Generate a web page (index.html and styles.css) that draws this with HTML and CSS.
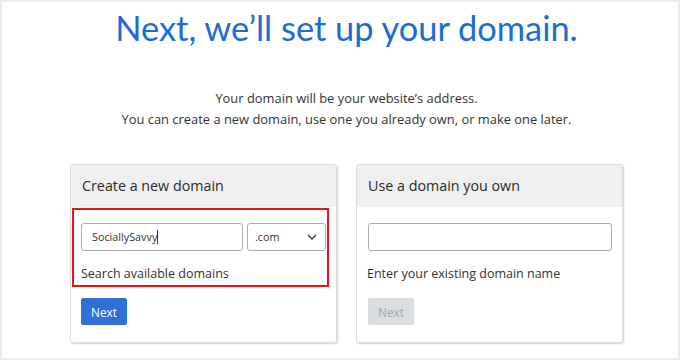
FILE: index.html
```html
<!DOCTYPE html>
<html>
<head>
<meta charset="utf-8">
<link rel="stylesheet" href="styles.css">
</head>
<body>
<div class="page">
  <h1 class="title">Next, we’ll set up your domain.</h1>
  <p class="intro">Your domain will be your website’s address.<br>You can create a new domain, use one you already own, or make one later.</p>
  <div class="cards">
    <section class="card">
      <header class="card-head">Create a new domain</header>
      <div class="card-body">
        <div class="highlight"></div>
        <div class="row">
          <div class="field field-name">SociallySavvy<span class="caret"></span></div>
          <div class="field field-tld">.com
            <svg class="chev" width="10" height="6" viewBox="0 0 10 6"><path d="M1 1 L5 5 L9 1" fill="none" stroke="#333" stroke-width="1.3"/></svg>
          </div>
        </div>
        <p class="hint">Search available domains</p>
        <button class="btn">Next</button>
      </div>
    </section>
    <section class="card">
      <header class="card-head">Use a domain you own</header>
      <div class="card-body">
        <div class="row">
          <div class="field field-full"></div>
        </div>
        <p class="hint">Enter your existing domain name</p>
        <button class="btn btn-disabled">Next</button>
      </div>
    </section>
  </div>
</div>
</body>
</html>
```
FILE: styles.css
```css
html, body {
  margin: 0;
  padding: 0;
  background: #fff;
}
.page {
  width: 680px;
  height: 360px;
  box-sizing: border-box;
  border: 2px solid #ececec;
  padding-left: 68px;
  overflow: hidden;
}
.title {
  margin: 0;
  width: 553px;
  text-align: center;
  font-family: Lato, "Noto Sans", sans-serif;
  font-weight: 400;
  font-size: 34.4px;
  line-height: 40px;
  padding-top: 6px;
  color: #1b6dd4;
}
.intro {
  width: 553px;
  margin: 40px 0 0;
  text-align: center;
  font-family: "Open Sans", sans-serif;
  font-size: 12.9px;
  line-height: 21px;
  color: #333;
}
.cards {
  display: flex;
  gap: 19px;
  margin-top: 34px;
}
.card {
  width: 267px;
  height: 179px;
  box-sizing: border-box;
  border: 1px solid #dcdcdc;
  border-radius: 3px;
  box-shadow: 1px 1px 2px rgba(0,0,0,0.18);
  font-family: "Open Sans", sans-serif;
  position: relative;
}
.card-head {
  height: 42px;
  background: #efefef;
  padding-left: 11px;
  font-size: 14.3px;
  line-height: 42px;
  color: #2b2b2b;
  border-radius: 3px 3px 0 0;
}
.card-body {
  padding: 16px 10px 0;
  position: relative;
}
.highlight {
  position: absolute;
  left: 1px;
  top: 1px;
  width: 257px;
  height: 79px;
  box-sizing: border-box;
  border: 2px solid #e8141c;
}
.row {
  display: flex;
  gap: 4px;
}
.field {
  height: 28px;
  box-sizing: border-box;
  border: 1px solid #a9adb5;
  border-radius: 3px;
  font-size: 10.8px;
  line-height: 26px;
  color: #333;
  padding-left: 10px;
}
.field-name {
  width: 162px;
}
.caret {
  display: inline-block;
  width: 1px;
  height: 14px;
  background: #333;
  vertical-align: -3px;
}
.field-tld {
  width: 79px;
  padding-left: 7px;
  display: flex;
  justify-content: space-between;
  align-items: center;
  padding-right: 8px;
}
.field-full {
  width: 244px;
  margin-left: 1px;
}
.hint {
  margin: 13px 0 0;
  font-size: 12.5px;
  line-height: 20px;
  color: #333;
}
.btn {
  display: block;
  margin-top: 14px;
  height: 27px;
  padding: 0 10px;
  border: none;
  border-radius: 2px;
  background: #2f6fd6;
  color: #fff;
  font-family: "Open Sans", sans-serif;
  font-size: 11.8px;
}
.btn-disabled {
  background: #d9dee3;
  color: #a3a6aa;
  margin-left: 1px;
}
```
